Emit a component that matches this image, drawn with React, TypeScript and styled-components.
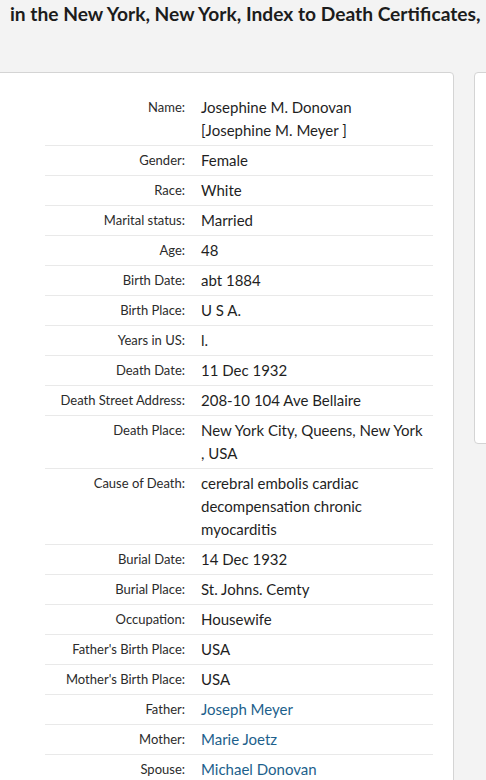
import React from "react";
import styled, { createGlobalStyle } from "styled-components";

const GlobalStyle = createGlobalStyle`
  html, body {
    margin: 0;
    padding: 0;
    background: #f3f3f3;
    overflow: hidden;
  }
  body {
    font-family: Lato, "Open Sans", sans-serif;
    color: #1f1f1f;
  }
`;

const Page = styled.div`
  width: 486px;
  height: 780px;
  overflow: hidden;
`;

const Subtitle = styled.h2`
  margin: 0;
  padding: 2px 0 0 10px;
  height: 72px;
  box-sizing: border-box;
  font-size: 19.2px;
  line-height: 24px;
  font-weight: 700;
  color: #1c1c1c;
  white-space: nowrap;
`;

const Columns = styled.div`
  display: flex;
  align-items: flex-start;
  gap: 20px;
  margin-left: -30px;
`;

const Card = styled.section`
  flex: none;
  width: 484px;
  box-sizing: border-box;
  background: #fff;
  border: 1px solid #d4d4d4;
  border-radius: 4px;
  padding: 20px 20px 0 74px;
  height: 760px;
`;

const SideCard = styled.aside`
  flex: none;
  width: 120px;
  height: 372px;
  box-sizing: border-box;
  background: #fff;
  border: 1px solid #d4d4d4;
  border-radius: 4px;
`;

const Table = styled.dl`
  margin: 0;
  display: grid;
  grid-template-columns: 156px 1fr;
`;

const Label = styled.dt`
  margin: 0;
  padding: 3px 16px 3px 0;
  text-align: right;
  font-size: 13px;
  line-height: 23px;
  color: #2b2b2b;
  border-bottom: 1px solid #e9e9e9;
`;

const Value = styled.dd<{ $link?: boolean }>`
  margin: 0;
  padding: 3px 5px 3px 0;
  font-size: 15px;
  line-height: 23px;
  color: ${({ $link }) => ($link ? "#1d5f8c" : "#1f1f1f")};
  border-bottom: 1px solid #e9e9e9;
`;

const Line = styled.span`
  display: block;
`;

type Row = { label: string; value: string | string[]; link?: boolean };

const rows: Row[] = [
  { label: "Name:", value: ["Josephine M. Donovan", "[Josephine M. Meyer ]"] },
  { label: "Gender:", value: "Female" },
  { label: "Race:", value: "White" },
  { label: "Marital status:", value: "Married" },
  { label: "Age:", value: "48" },
  { label: "Birth Date:", value: "abt 1884" },
  { label: "Birth Place:", value: "U S A." },
  { label: "Years in US:", value: "l." },
  { label: "Death Date:", value: "11 Dec 1932" },
  { label: "Death Street Address:", value: "208-10 104 Ave Bellaire" },
  { label: "Death Place:", value: "New York City, Queens, New York , USA" },
  { label: "Cause of Death:", value: "cerebral embolis cardiac decompensation chronic myocarditis" },
  { label: "Burial Date:", value: "14 Dec 1932" },
  { label: "Burial Place:", value: "St. Johns. Cemty" },
  { label: "Occupation:", value: "Housewife" },
  { label: "Father's Birth Place:", value: "USA" },
  { label: "Mother's Birth Place:", value: "USA" },
  { label: "Father:", value: "Joseph Meyer", link: true },
  { label: "Mother:", value: "Marie Joetz", link: true },
  { label: "Spouse:", value: "Michael Donovan", link: true },
];

const App: React.FC = () => {
  return (
    <Page>
      <GlobalStyle />
      <Subtitle>in the New York, New York, Index to Death Certificates,</Subtitle>
      <Columns>
        <Card>
          <Table>
            {rows.map((row) => (
              <React.Fragment key={row.label}>
                <Label>{row.label}</Label>
                <Value $link={row.link}>
                  {Array.isArray(row.value)
                    ? row.value.map((line) => <Line key={line}>{line}</Line>)
                    : row.value}
                </Value>
              </React.Fragment>
            ))}
          </Table>
        </Card>
        <SideCard />
      </Columns>
    </Page>
  );
};

export default App;
